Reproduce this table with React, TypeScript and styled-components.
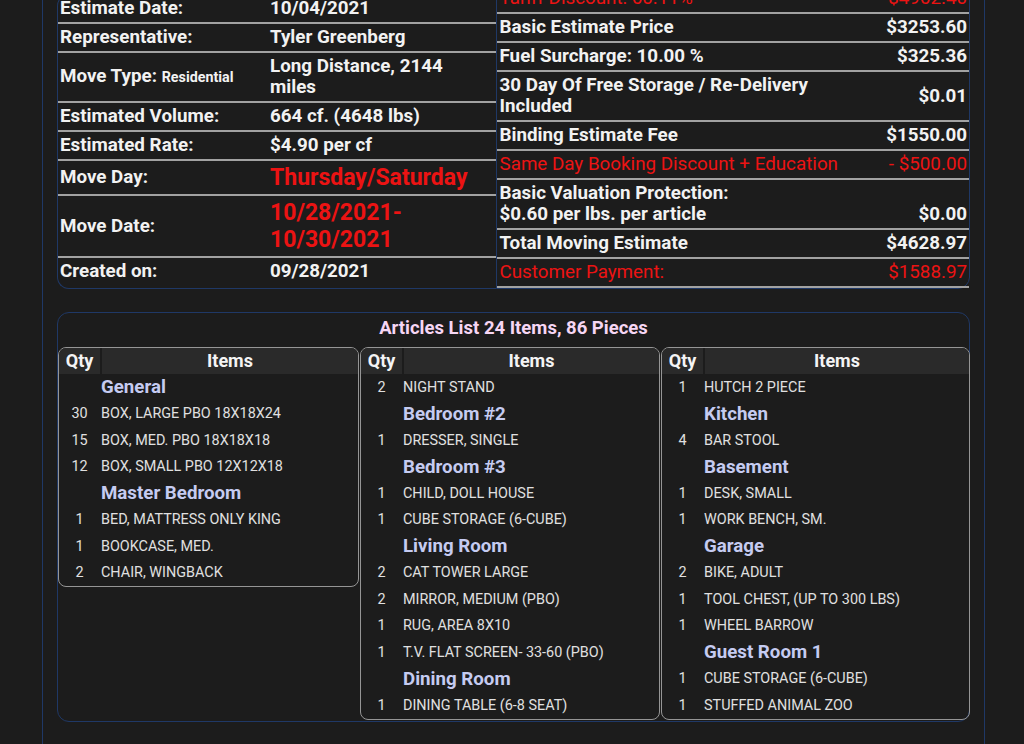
import React from 'react';
import styled, { createGlobalStyle } from 'styled-components';

const Global = createGlobalStyle`
  html, body { margin: 0; padding: 0; background: #1c1c1c; overflow: hidden; }
  body { font-family: Roboto, "Noto Sans", "Liberation Sans", sans-serif; color: #f2f2f2; }
  * { box-sizing: border-box; }
`;

const BLUE = '#1f3866';
const RED = '#ec1313';

const Page = styled.div`
  margin: -16px 0 0 42px;
  width: 943px;
  min-height: 820px;
  border-left: 1px solid ${BLUE};
  border-right: 1px solid ${BLUE};
  padding: 0 14px;
`;

const TopSection = styled.div`
  display: flex;
  align-items: flex-end;
`;

const LeftCard = styled.div`
  width: 439px;
  border: 1px solid ${BLUE};
  border-right: none;
  border-radius: 12px 0 0 12px;
  padding-bottom: 3px;
`;

const RightCard = styled.div`
  width: 475px;
  border: 1px solid ${BLUE};
  border-radius: 0 12px 12px 0;
`;

const InfoRow = styled.div<{ $cols: string; $align?: string; $keepLast?: boolean }>`
  display: grid;
  grid-template-columns: ${p => p.$cols};
  align-items: ${p => p.$align || 'center'};
  padding: 3px 6px 3px 2px;
  border-bottom: 2px solid #a2a2a2;
  font-size: 18.8px;
  line-height: 21px;
  font-weight: 700;
  &:last-child {
    border-bottom: ${p => (p.$keepLast ? '2px solid #a2a2a2' : 'none')};
  }
`;

const RightRow = styled(InfoRow)`
  padding-left: 3px;
  padding-right: 2px;
`;

const Label = styled.div<{ $red?: boolean; $light?: boolean }>`
  color: ${p => (p.$red ? RED : '#f2f2f2')};
  font-weight: ${p => (p.$light ? 400 : 700)};
`;

const Small = styled.span`
  font-size: 14.3px;
  font-weight: 700;
`;

const Value = styled.div<{ $red?: boolean; $big?: boolean; $right?: boolean; $light?: boolean }>`
  color: ${p => (p.$red ? RED : '#f2f2f2')};
  font-size: ${p => (p.$big ? '23px' : '18.8px')};
  line-height: ${p => (p.$big ? '27px' : '21px')};
  font-weight: ${p => (p.$light ? 400 : 700)};
  text-align: ${p => (p.$right ? 'right' : 'left')};
`;

const ArticlesCard = styled.section`
  margin-top: 23px;
  border: 1px solid ${BLUE};
  border-radius: 12px;
  padding: 4px 0 1px;
`;

const ArticlesTitle = styled.h3`
  margin: 0 0 8px;
  text-align: center;
  font-size: 18.5px;
  line-height: 22px;
  font-weight: 700;
  color: #f6d6f4;
`;

const Columns = styled.div`
  display: grid;
  grid-template-columns: 301px 300px 309px;
  column-gap: 1px;
  align-items: start;
`;

const Column = styled.div`
  border: 1px solid #959595;
  border-radius: 8px;
  overflow: hidden;
`;

const HeadRow = styled.div`
  display: grid;
  grid-template-columns: 41px 1fr;
  height: 26px;
  background: #2a2a2a;
  font-size: 18px;
  line-height: 26px;
  font-weight: 700;
  color: #f4f4f4;
`;

const HeadQty = styled.div`
  text-align: center;
`;

const HeadItems = styled.div`
  text-align: center;
  border-left: 2px solid #1c1c1c;
`;

const ItemRow = styled.div`
  display: grid;
  grid-template-columns: 41px 1fr;
  height: 26.5px;
  align-items: center;
`;

const QtyCell = styled.div`
  text-align: center;
  font-size: 14.4px;
  color: #e0e0e0;
`;

const ItemCell = styled.div<{ $category?: boolean }>`
  padding-left: 1px;
  font-size: ${p => (p.$category ? '18.7px' : '14.4px')};
  font-weight: ${p => (p.$category ? 700 : 400)};
  color: ${p => (p.$category ? '#c5cbf1' : '#e0e0e0')};
  white-space: nowrap;
`;

const NextCard = styled.div`
  margin-top: 22px;
  height: 60px;
  border: 1px solid ${BLUE};
  border-bottom: none;
  border-radius: 12px 12px 0 0;
`;

type Entry = [string | null, string];

const columns: Entry[][] = [
  [
    [null, 'General'],
    ['30', 'BOX, LARGE PBO 18X18X24'],
    ['15', 'BOX, MED. PBO 18X18X18'],
    ['12', 'BOX, SMALL PBO 12X12X18'],
    [null, 'Master Bedroom'],
    ['1', 'BED, MATTRESS ONLY KING'],
    ['1', 'BOOKCASE, MED.'],
    ['2', 'CHAIR, WINGBACK'],
  ],
  [
    ['2', 'NIGHT STAND'],
    [null, 'Bedroom #2'],
    ['1', 'DRESSER, SINGLE'],
    [null, 'Bedroom #3'],
    ['1', 'CHILD, DOLL HOUSE'],
    ['1', 'CUBE STORAGE (6-CUBE)'],
    [null, 'Living Room'],
    ['2', 'CAT TOWER LARGE'],
    ['2', 'MIRROR, MEDIUM (PBO)'],
    ['1', 'RUG, AREA 8X10'],
    ['1', 'T.V. FLAT SCREEN- 33-60 (PBO)'],
    [null, 'Dining Room'],
    ['1', 'DINING TABLE (6-8 SEAT)'],
  ],
  [
    ['1', 'HUTCH 2 PIECE'],
    [null, 'Kitchen'],
    ['4', 'BAR STOOL'],
    [null, 'Basement'],
    ['1', 'DESK, SMALL'],
    ['1', 'WORK BENCH, SM.'],
    [null, 'Garage'],
    ['2', 'BIKE, ADULT'],
    ['1', 'TOOL CHEST, (UP TO 300 LBS)'],
    ['1', 'WHEEL BARROW'],
    [null, 'Guest Room 1'],
    ['1', 'CUBE STORAGE (6-CUBE)'],
    ['1', 'STUFFED ANIMAL ZOO'],
  ],
];

const L = '210px 1fr';
const R = '350px 1fr';

export default function App() {
  return (
    <>
      <Global />
      <Page>
        <TopSection>
          <LeftCard>
            <InfoRow $cols={L}><Label>Estimate Date:</Label><Value>10/04/2021</Value></InfoRow>
            <InfoRow $cols={L}><Label>Representative:</Label><Value>Tyler Greenberg</Value></InfoRow>
            <InfoRow $cols={L}>
              <Label>Move Type: <Small>Residential</Small></Label>
              <Value>Long Distance, 2144 miles</Value>
            </InfoRow>
            <InfoRow $cols={L}><Label>Estimated Volume:</Label><Value>664 cf. (4648 lbs)</Value></InfoRow>
            <InfoRow $cols={L}><Label>Estimated Rate:</Label><Value>$4.90 per cf</Value></InfoRow>
            <InfoRow $cols={L}><Label>Move Day:</Label><Value $red $big>Thursday/Saturday</Value></InfoRow>
            <InfoRow $cols={L}><Label>Move Date:</Label><Value $red $big>10/28/2021-10/30/2021</Value></InfoRow>
            <InfoRow $cols={L}><Label>Created on:</Label><Value>09/28/2021</Value></InfoRow>
          </LeftCard>
          <RightCard>
            <RightRow $cols={R} $keepLast><Label $red $light>Tariff Discount: 60.11%</Label><Value $red $light $right>-$4962.40</Value></RightRow>
            <RightRow $cols={R} $keepLast><Label>Basic Estimate Price</Label><Value $right>$3253.60</Value></RightRow>
            <RightRow $cols={R} $keepLast><Label>Fuel Surcharge: 10.00 %</Label><Value $right>$325.36</Value></RightRow>
            <RightRow $cols={R} $keepLast><Label>30 Day Of Free Storage / Re-Delivery Included</Label><Value $right>$0.01</Value></RightRow>
            <RightRow $cols={R} $keepLast><Label>Binding Estimate Fee</Label><Value $right>$1550.00</Value></RightRow>
            <RightRow $cols={R} $keepLast><Label $red $light>Same Day Booking Discount + Education</Label><Value $red $light $right>- $500.00</Value></RightRow>
            <RightRow $cols={R} $keepLast $align="end">
              <Label>Basic Valuation Protection:<br />$0.60 per lbs. per article</Label>
              <Value $right>$0.00</Value>
            </RightRow>
            <RightRow $cols={R} $keepLast><Label>Total Moving Estimate</Label><Value $right>$4628.97</Value></RightRow>
            <RightRow $cols={R} $keepLast><Label $red $light>Customer Payment:</Label><Value $red $light $right>$1588.97</Value></RightRow>
          </RightCard>
        </TopSection>

        <ArticlesCard>
          <ArticlesTitle>Articles List 24 Items, 86 Pieces</ArticlesTitle>
          <Columns>
            {columns.map((col, ci) => (
              <Column key={ci}>
                <HeadRow>
                  <HeadQty>Qty</HeadQty>
                  <HeadItems>Items</HeadItems>
                </HeadRow>
                {col.map(([qty, name], i) => (
                  <ItemRow key={i}>
                    <QtyCell>{qty ?? ''}</QtyCell>
                    <ItemCell $category={qty === null}>{name}</ItemCell>
                  </ItemRow>
                ))}
              </Column>
            ))}
          </Columns>
        </ArticlesCard>
        <NextCard />
      </Page>
    </>
  );
}
